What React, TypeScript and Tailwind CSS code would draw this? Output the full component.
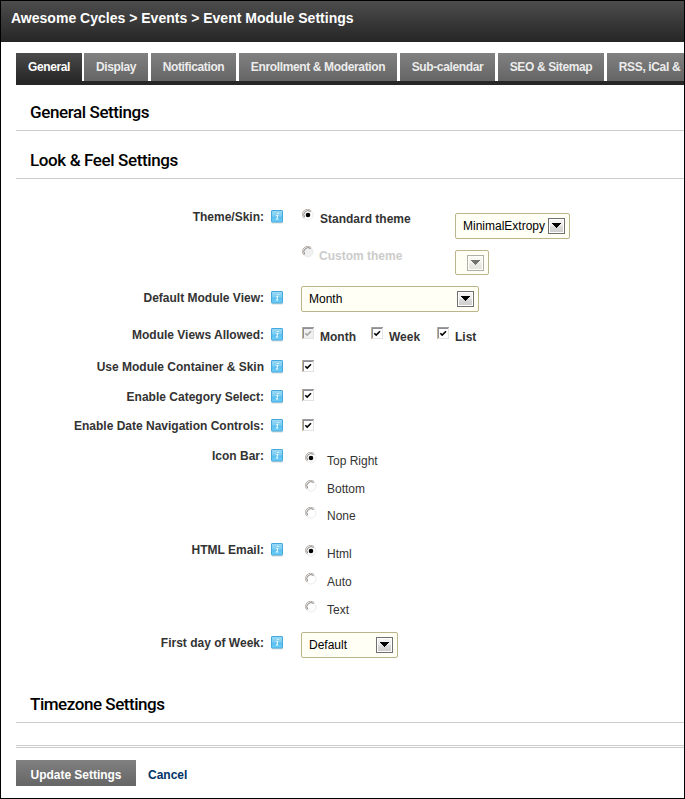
import type { ReactNode } from "react";

function InfoIcon() {
  return (
    <svg width="13" height="14" viewBox="0 0 13 14" className="block shrink-0" aria-label="Help">
      <defs>
        <linearGradient id="infoFill" x1="0" y1="0" x2="0" y2="1">
          <stop offset="0" stopColor="#9bdaf6" />
          <stop offset="0.5" stopColor="#7accf2" />
          <stop offset="0.55" stopColor="#58bdee" />
          <stop offset="1" stopColor="#6fd0f8" />
        </linearGradient>
      </defs>
      <rect x="0.5" y="2" width="11.5" height="11.6" rx="1" fill="#d9d9d9" />
      <rect x="0.5" y="0.5" width="11" height="11.5" rx="0.5" fill="url(#infoFill)" stroke="#45a9de" />
      <path d="M6.5 2.9h1.4l-.3 1.2H6.2zM5.1 5h2.2l-.8 3.6h.8l-.2.8H4.8l.2-.8h.5l.6-2.8H5z" fill="#fff" fillOpacity="0.92" />
    </svg>
  );
}

function Radio({ checked = false, disabled = false }: { checked?: boolean; disabled?: boolean }) {
  return (
    <svg width="12" height="12" viewBox="0 0 12 12" className="block shrink-0" role="radio" aria-checked={checked}>
      <circle cx="6" cy="6" r="5" fill={disabled ? "#f0f0f0" : "#fff"} stroke="#ececec" />
      <path d="M2.1 9.2A5 5 0 0 1 9.2 1.7" fill="none" stroke="#b8aea4" strokeWidth="1" />
      <path d="M2.7 8.2A4.1 4.1 0 0 1 8.6 2.6" fill="none" stroke="#7d7d80" strokeWidth="0.9" />
      {checked && <circle cx="6" cy="6" r="2.3" fill="#000" />}
    </svg>
  );
}

function Check({ disabled = false }: { disabled?: boolean }) {
  return (
    <svg width="12" height="12" viewBox="0 0 12 12" className="block shrink-0" role="checkbox" aria-checked="true">
      <rect width="12" height="12" fill="#e2e2e2" />
      <rect x="1" y="1" width="10" height="10" fill={disabled ? "#f0f0f0" : "#fff"} />
      <rect width="12" height="1" fill="#9c9c9c" />
      <rect width="1" height="12" fill="#c3b194" />
      <path d="M1 11V1H11V2H2V11z" fill="#8b8e94" />
      <path d="M3.3 6.2 5.2 8.1 9 4.3" fill="none" stroke={disabled ? "#a6a6a6" : "#000"} strokeWidth="1.6" />
    </svg>
  );
}

function Select({ value, className, disabled = false }: { value: string; className: string; disabled?: boolean }) {
  return (
    <div className={"flex shrink-0 items-center justify-between rounded-[2px] border border-[#bcb58c] bg-[#fffff5] pr-1 pl-[7px] text-black " + className}>
      <span>{value}</span>
      <svg width="17" height="16" viewBox="0 0 17 16" className="block shrink-0" shapeRendering="crispEdges" opacity={disabled ? 0.55 : 1}>
        <defs>
          <linearGradient id="arrowFill" x1="0" y1="0" x2="0" y2="1">
            <stop offset="0" stopColor="#f4f4f4" />
            <stop offset="0.48" stopColor="#ececec" />
            <stop offset="0.5" stopColor="#dcdcdc" />
            <stop offset="1" stopColor="#cfcfcf" />
          </linearGradient>
        </defs>
        <rect x="0.5" y="0.5" width="16" height="15" fill="#fff" stroke="#707070" />
        <rect x="2" y="2" width="13" height="12" fill="url(#arrowFill)" />
        <path d="M4 5h9v1h-1v1h-1v1h-1v1h-1v1H8V9H7V8H6V7H5V6H4z" fill="#000" />
      </svg>
    </div>
  );
}

function Row({ label, height, children }: { label: string; height: string; children: ReactNode }) {
  return (
    <div className={"flex " + height}>
      <div className="w-[248px] pt-[5px] text-right leading-[15px] font-bold">{label}</div>
      <div className="w-[37px] pt-[5px] pl-[7px]"><InfoIcon /></div>
      <div className="flex-1">{children}</div>
    </div>
  );
}

function Option({ text, checked, className }: { text: string; checked?: boolean; className: string }) {
  return (
    <div className={"flex pl-1 " + className}>
      <Radio checked={checked} />
      <span className="mt-[2px] ml-[10px] leading-[15px]">{text}</span>
    </div>
  );
}

function ViewCheck({ text, disabled, className }: { text: string; disabled?: boolean; className: string }) {
  return (
    <div className={"flex pt-1 " + className}>
      <Check disabled={disabled} />
      <span className="mt-[3px] ml-[6px] leading-[15px] font-bold">{text}</span>
    </div>
  );
}

function Heading({ children, className }: { children: ReactNode; className: string }) {
  return (
    <h2 className={"ml-[15px] border-b border-[#cccccc] pl-[14px] font-['Roboto',sans-serif] text-[17px] leading-[22px] font-medium text-black " + className}>
      {children}
    </h2>
  );
}

const tabs = [
  { label: "Display", className: "w-16" },
  { label: "Notification", className: "ml-[3px] w-[85px]" },
  { label: "Enrollment & Moderation", className: "ml-[3px] w-[158px]" },
  { label: "Sub-calendar", className: "ml-[3px] w-[95px]" },
  { label: "SEO & Sitemap", className: "ml-[3px] w-[106px]" },
  { label: "RSS, iCal &", className: "ml-[3px] w-[85px]" },
];

export default function App() {
  return (
    <div className="h-[799px] w-[685px] overflow-hidden border border-black bg-white font-['Liberation_Sans',Arial,sans-serif] text-[12px] text-[#333333]">
      <header className="h-[41px] bg-linear-to-b from-[#4d4d4d] to-[#262626] pl-[10px] text-[14px] leading-[34px] font-bold tracking-[0.01px] whitespace-nowrap text-white">
        Awesome Cycles &gt; Events &gt; Event Module Settings
      </header>
      <nav className="mt-[11px] ml-[15px] flex h-8 overflow-hidden border-b-4 border-[#272727] font-bold tracking-[-0.36px] whitespace-nowrap">
        <div className="mr-[2px] h-7 w-[66px] shrink-0 bg-linear-to-b from-[#4b4b4b] to-[#272727] text-center leading-7 text-white">General</div>
        {tabs.map((t) => (
          <div key={t.label} className={"h-7 shrink-0 bg-linear-to-b from-[#818181] to-[#656565] text-center leading-7 text-[#ececec] " + t.className}>{t.label}</div>
        ))}
      </nav>
      <Heading className="h-[46px] pt-4 tracking-[-0.4px]">General Settings</Heading>
      <Heading className="h-12 pt-[18px] tracking-[-0.38px]">Look &amp; Feel Settings</Heading>

      <main className="ml-[15px] pt-[26px]">
        <Row label="Theme/Skin:" height="h-[81px]">
          <div className="flex h-[41px] pl-px">
            <div className="flex w-[153px] pt-1">
              <Radio checked />
              <span className="mt-[3px] ml-[6px] leading-[15px] font-bold">Standard theme</span>
            </div>
            <Select value="MinimalExtropy" className="mt-2 h-[26px] w-[115px]" />
          </div>
          <div className="flex pl-px">
            <div className="flex w-[153px]">
              <Radio disabled />
              <span className="mt-[3px] ml-[5px] leading-[15px] font-bold text-[#cccccc]">Custom theme</span>
            </div>
            <Select value="" disabled className="mt-1 h-[25px] w-[34px]" />
          </div>
        </Row>
        <Row label="Default Module View:" height="h-[37px]">
          <Select value="Month" className="h-[26px] w-[178px]" />
        </Row>
        <Row label="Module Views Allowed:" height="h-8">
          <div className="flex pl-px">
            <ViewCheck text="Month" disabled className="w-[69px]" />
            <ViewCheck text="Week" className="w-[66px]" />
            <ViewCheck text="List" className="w-[60px]" />
          </div>
        </Row>
        <Row label="Use Module Container & Skin" height="h-[30px]">
          <div className="pt-[5px] pl-px"><Check /></div>
        </Row>
        <Row label="Enable Category Select:" height="h-[29px]">
          <div className="pt-1 pl-px"><Check /></div>
        </Row>
        <Row label="Enable Date Navigation Controls:" height="h-[30px]">
          <div className="pt-[5px] pl-px"><Check /></div>
        </Row>
        <Row label="Icon Bar:" height="h-[94px]">
          <Option text="Top Right" checked className="mt-2 h-7" />
          <Option text="Bottom" className="h-[27px]" />
          <Option text="None" className="h-[27px]" />
        </Row>
        <Row label="HTML Email:" height="h-[93px]">
          <Option text="Html" checked className="mt-[7px] h-7" />
          <Option text="Auto" className="h-7" />
          <Option text="Text" className="h-[27px]" />
        </Row>
        <Row label="First day of Week:" height="h-[55px]">
          <Select value="Default" className="mt-px h-[26px] w-[97px]" />
        </Row>
      </main>

      <Heading className="h-[37px] pt-[7px] tracking-[-0.46px]">Timezone Settings</Heading>
      <footer className="mt-[22px] ml-[15px]">
        <div className="h-[3px] border-y border-[#cccccc]" />
        <div className="mt-3 flex items-center font-bold">
          <button className="h-[26px] w-[120px] bg-linear-to-b from-[#818181] to-[#656565] pt-1 tracking-[-0.03px] text-white">Update Settings</button>
          <a className="mt-1 ml-3 text-[#003366]">Cancel</a>
        </div>
      </footer>
    </div>
  );
}
